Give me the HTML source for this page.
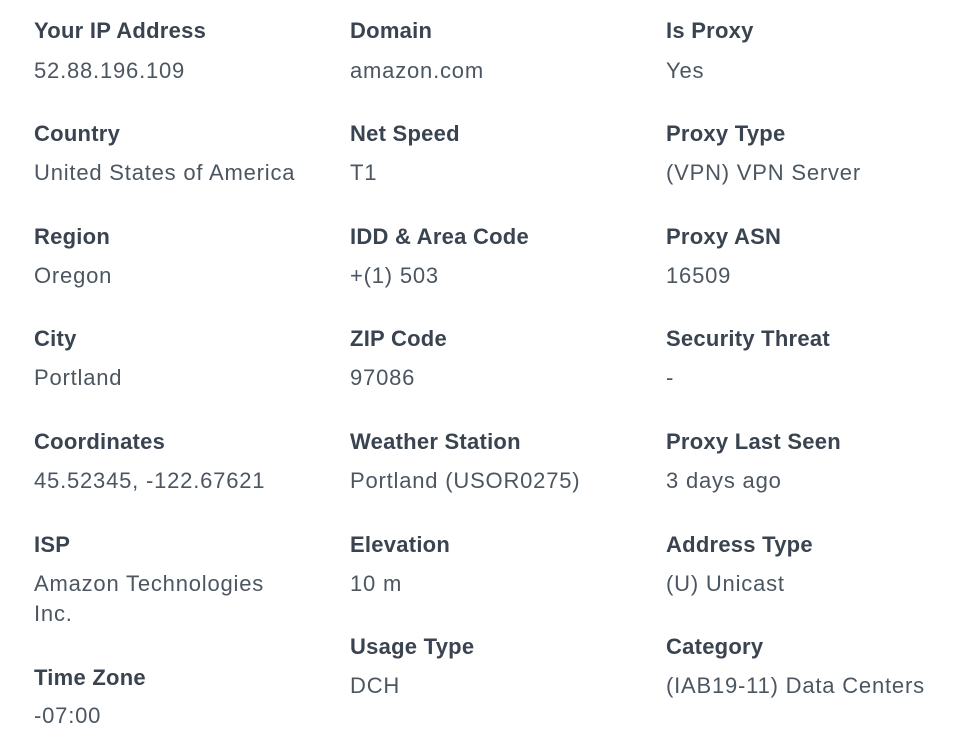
<!DOCTYPE html>
<html><head><meta charset="utf-8"><style>
html,body{margin:0;padding:0;background:#fff;width:958px;height:737px;overflow:hidden}
body{font-family:"Liberation Sans",sans-serif;position:relative}
.l,.v{position:absolute;line-height:30px;font-size:22px;white-space:nowrap}
.l{font-weight:bold;color:#3a4450;letter-spacing:0.25px}
.v{color:#4c5661;letter-spacing:0.8px}
</style></head><body>
<div class="l" style="left:34px;top:16px">Your IP Address</div>
<div class="v" style="left:34px;top:56px">52.88.196.109</div>
<div class="l" style="left:34px;top:119px">Country</div>
<div class="v" style="left:34px;top:158px">United States of America</div>
<div class="l" style="left:34px;top:222px">Region</div>
<div class="v" style="left:34px;top:261px">Oregon</div>
<div class="l" style="left:34px;top:324px">City</div>
<div class="v" style="left:34px;top:363px">Portland</div>
<div class="l" style="left:34px;top:427px">Coordinates</div>
<div class="v" style="left:34px;top:466px">45.52345, -122.67621</div>
<div class="l" style="left:34px;top:530px">ISP</div>
<div class="v" style="left:34px;top:569px">Amazon Technologies</div>
<div class="v" style="left:34px;top:599px">Inc.</div>
<div class="l" style="left:34px;top:663px">Time Zone</div>
<div class="v" style="left:34px;top:701px">-07:00</div>

<div class="l" style="left:350px;top:16px">Domain</div>
<div class="v" style="left:350px;top:56px">amazon.com</div>
<div class="l" style="left:350px;top:119px">Net Speed</div>
<div class="v" style="left:350px;top:158px">T1</div>
<div class="l" style="left:350px;top:222px">IDD &amp; Area Code</div>
<div class="v" style="left:350px;top:261px">+(1) 503</div>
<div class="l" style="left:350px;top:324px">ZIP Code</div>
<div class="v" style="left:350px;top:363px">97086</div>
<div class="l" style="left:350px;top:427px">Weather Station</div>
<div class="v" style="left:350px;top:466px">Portland (USOR0275)</div>
<div class="l" style="left:350px;top:530px">Elevation</div>
<div class="v" style="left:350px;top:569px">10 m</div>
<div class="l" style="left:350px;top:632px">Usage Type</div>
<div class="v" style="left:350px;top:671px">DCH</div>

<div class="l" style="left:666px;top:16px">Is Proxy</div>
<div class="v" style="left:666px;top:56px">Yes</div>
<div class="l" style="left:666px;top:119px">Proxy Type</div>
<div class="v" style="left:666px;top:158px">(VPN) VPN Server</div>
<div class="l" style="left:666px;top:222px">Proxy ASN</div>
<div class="v" style="left:666px;top:261px">16509</div>
<div class="l" style="left:666px;top:324px">Security Threat</div>
<div class="v" style="left:666px;top:363px">-</div>
<div class="l" style="left:666px;top:427px">Proxy Last Seen</div>
<div class="v" style="left:666px;top:466px">3 days ago</div>
<div class="l" style="left:666px;top:530px">Address Type</div>
<div class="v" style="left:666px;top:569px">(U) Unicast</div>
<div class="l" style="left:666px;top:632px">Category</div>
<div class="v" style="left:666px;top:671px">(IAB19-11) Data Centers</div>
</body></html>
